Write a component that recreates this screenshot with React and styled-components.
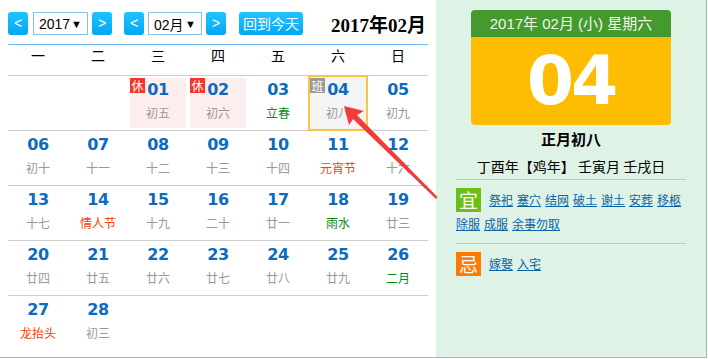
import * as React from "react"
import styled, { createGlobalStyle, css } from "styled-components"

const GlobalStyle = createGlobalStyle`
  body {
    margin: 0;
    background: #fff;
    font-family: "Liberation Sans", "Noto Sans CJK SC", sans-serif;
  }
`

const Page = styled.div`
  position: relative;
  display: flex;
  width: 706px;
  height: 357px;
  border-right: 1px solid #8fc9a0;
  border-bottom: 1px solid #8fc9a0;
`

const Calendar = styled.div`
  width: 420px;
  padding: 12px 8px 0;
`

const Toolbar = styled.div`
  display: flex;
  align-items: center;
  height: 23px;
  padding-bottom: 9px;
  border-bottom: 1px solid #6cb4f2;
`

const NavButton = styled.button`
  width: 20px;
  height: 23px;
  padding: 0;
  margin-right: ${({ gap }) => gap || 0}px;
  border: none;
  border-radius: 3px;
  background: linear-gradient(#22c4ff, #04a6f4);
  color: #fff;
  font: 14px "Liberation Sans", sans-serif;
  line-height: 23px;
`

const TodayButton = styled(NavButton)`
  width: 64px;
  font-family: "Noto Sans CJK SC", sans-serif;
  font-size: 14px;
`

const SelectBox = styled.div`
  display: flex;
  align-items: center;
  justify-content: space-between;
  box-sizing: border-box;
  width: ${({ w }) => w}px;
  height: 23px;
  padding: 0 5px 0 5px;
  margin-right: 4px;
  border: 1px solid #8dbfe6;
  background: #fff;
  font: 14px "Liberation Sans", "Noto Sans CJK SC", sans-serif;
  color: #000;
`

const Caret = styled.span`
  font-size: 11px;
`

const Title = styled.div`
  margin-left: auto;
  margin-right: 2px;
  font: bold 19px "Liberation Serif", "Noto Sans CJK SC", serif;
  color: #000;
`

const Grid = styled.div`
  display: grid;
  grid-template-columns: repeat(7, 60px);
`

const WeekDay = styled.div`
  height: 30px;
  line-height: 30px;
  text-align: center;
  font: 14px "Noto Sans CJK SC", sans-serif;
  color: #000;
  border-bottom: 1px solid #ccc;
`

const Cell = styled.div`
  position: relative;
  height: 54px;
  padding: 2px;
  box-sizing: border-box;
  ${({ last }) => !last && css`border-bottom: 1px solid #ccc; height: 55px;`}
  ${({ selected }) =>
    selected &&
    css`
      background: #f4f4f4;
      &::after {
        content: "";
        position: absolute;
        top: -1px;
        left: 0;
        right: 0;
        bottom: -1px;
        border: 2px solid #fcc444;
      }
    `}
`

const Inner = styled.div`
  position: relative;
  height: 50px;
  padding-top: 2px;
  box-sizing: border-box;
  text-align: center;
  background: ${({ holiday }) => (holiday ? "#fdeeee" : "transparent")};
`

const Tag = styled.span`
  position: absolute;
  top: 0;
  left: 0;
  width: 15px;
  height: 15px;
  font: 12px/15px "Noto Sans CJK SC", sans-serif;
  color: #fff;
  text-align: center;
  background: ${({ kind }) => (kind === "work" ? "#999" : "#f2362c")};
`

const DayNum = styled.div`
  font: bold 16px/20px "DejaVu Sans", sans-serif;
  letter-spacing: -0.5px;
  color: #0d6bbf;
`

const Lunar = styled.div`
  margin-top: 5px;
  font: 12px/16px "Noto Sans CJK SC", sans-serif;
  color: ${({ tone }) =>
    tone === "red" ? "#ff3a00" : tone === "green" ? "#078a1a" : "#999"};
`

const Panel = styled.div`
  flex: 1;
  padding-top: 10px;
  background: #dff2e6;
`

const Card = styled.div`
  width: 200px;
  margin: 0 auto;
  border-radius: 4px;
  overflow: hidden;
`

const CardHead = styled.div`
  height: 27px;
  text-align: center;
  background: #449a2f;
  color: #eef8e8;
  font: 15px/27px "Liberation Sans", "Noto Sans CJK SC", sans-serif;
`

const CardBody = styled.div`
  height: 88px;
  text-align: center;
  background: #fdbc00;
  color: #fff;
  font: bold 68px/88px "DejaVu Sans", sans-serif;
  letter-spacing: -3px;
`

const LunarTitle = styled.div`
  text-align: center;
  font: bold 15px/28px "Noto Sans CJK SC", sans-serif;
  color: #000;
`

const GanZhi = styled.div`
  text-align: center;
  font: 14px/26px "Noto Sans CJK SC", sans-serif;
  color: #000;
`

const Section = styled.div`
  margin: 0 20px;
  padding: 8px 0 7px;
  border-top: 1px solid #a9d8b8;
  font: 12px/24px "Noto Sans CJK SC", sans-serif;
`

const Mark = styled.span`
  display: inline-block;
  width: 25px;
  height: 24px;
  margin-right: 8px;
  vertical-align: top;
  text-align: center;
  color: #fff;
  font-size: 19px;
  line-height: 24px;
  background: ${({ bad }) => (bad ? "#ff7a00" : "#6abf15")};
`

const Item = styled.a`
  margin-right: 4px;
  color: #0a64a8;
  text-decoration: underline;
  cursor: pointer;
`

const Arrow = styled.svg`
  position: absolute;
  left: 0;
  top: 0;
  pointer-events: none;
`

const weekNames = ["一", "二", "三", "四", "五", "六", "日"]

const weeks = [
  [
    null,
    null,
    { d: "01", l: "初五", tag: "休" },
    { d: "02", l: "初六", tag: "休" },
    { d: "03", l: "立春", tone: "green" },
    { d: "04", l: "初八", tag: "班", selected: true },
    { d: "05", l: "初九" },
  ],
  [
    { d: "06", l: "初十" },
    { d: "07", l: "十一" },
    { d: "08", l: "十二" },
    { d: "09", l: "十三" },
    { d: "10", l: "十四" },
    { d: "11", l: "元宵节", tone: "red" },
    { d: "12", l: "十六" },
  ],
  [
    { d: "13", l: "十七" },
    { d: "14", l: "情人节", tone: "red" },
    { d: "15", l: "十九" },
    { d: "16", l: "二十" },
    { d: "17", l: "廿一" },
    { d: "18", l: "雨水", tone: "green" },
    { d: "19", l: "廿三" },
  ],
  [
    { d: "20", l: "廿四" },
    { d: "21", l: "廿五" },
    { d: "22", l: "廿六" },
    { d: "23", l: "廿七" },
    { d: "24", l: "廿八" },
    { d: "25", l: "廿九" },
    { d: "26", l: "二月", tone: "green" },
  ],
  [
    { d: "27", l: "龙抬头", tone: "red" },
    { d: "28", l: "初三" },
    null,
    null,
    null,
    null,
    null,
  ],
]

const good = ["祭祀", "塞穴", "结网", "破土", "谢土", "安葬", "移柩", "除服", "成服", "余事勿取"]
const bad = ["嫁娶", "入宅"]

const DayCell = ({ day, last }) => {
  if (!day) return <Cell last={last} />
  const holiday = day.tag === "休"
  return (
    <Cell last={last} selected={day.selected}>
      <Inner holiday={holiday}>
        {day.tag && <Tag kind={holiday ? "rest" : "work"}>{day.tag}</Tag>}
        <DayNum>{day.d}</DayNum>
        <Lunar tone={day.tone}>{day.l}</Lunar>
      </Inner>
    </Cell>
  )
}

const Words = ({ list }) =>
  list.map(w => (
    <React.Fragment key={w}>
      <Item>{w}</Item>
      <wbr />
    </React.Fragment>
  ))

export default function App() {
  return (
    <>
      <GlobalStyle />
      <Page>
        <Calendar>
          <Toolbar>
            <NavButton gap={5}>&lt;</NavButton>
            <SelectBox w={55}>
              2017 <Caret>▼</Caret>
            </SelectBox>
            <NavButton gap={12}>&gt;</NavButton>
            <NavButton gap={4}>&lt;</NavButton>
            <SelectBox w={54}>
              02月 <Caret>▼</Caret>
            </SelectBox>
            <NavButton gap={13}>&gt;</NavButton>
            <TodayButton>回到今天</TodayButton>
            <Title>2017年02月</Title>
          </Toolbar>
          <Grid>
            {weekNames.map(n => (
              <WeekDay key={n}>{n}</WeekDay>
            ))}
            {weeks.map((w, wi) =>
              w.map((day, di) => (
                <DayCell key={wi + "-" + di} day={day} last={wi === weeks.length - 1} />
              ))
            )}
          </Grid>
        </Calendar>
        <Panel>
          <Card>
            <CardHead>2017年 02月 (小) 星期六</CardHead>
            <CardBody>04</CardBody>
          </Card>
          <LunarTitle>正月初八</LunarTitle>
          <GanZhi>丁酉年【鸡年】 壬寅月 壬戌日</GanZhi>
          <Section>
            <Mark>宜</Mark>
            <Words list={good} />
          </Section>
          <Section>
            <Mark bad>忌</Mark>
            <Words list={bad} />
          </Section>
        </Panel>
        <Arrow width="440" height="210" viewBox="0 0 440 210">
          <polygon
            points="344,106 364,111 357,115 437.5,197 436,199 353,119 349,125"
            fill="#f23b3b"
          />
        </Arrow>
      </Page>
    </>
  )
}
